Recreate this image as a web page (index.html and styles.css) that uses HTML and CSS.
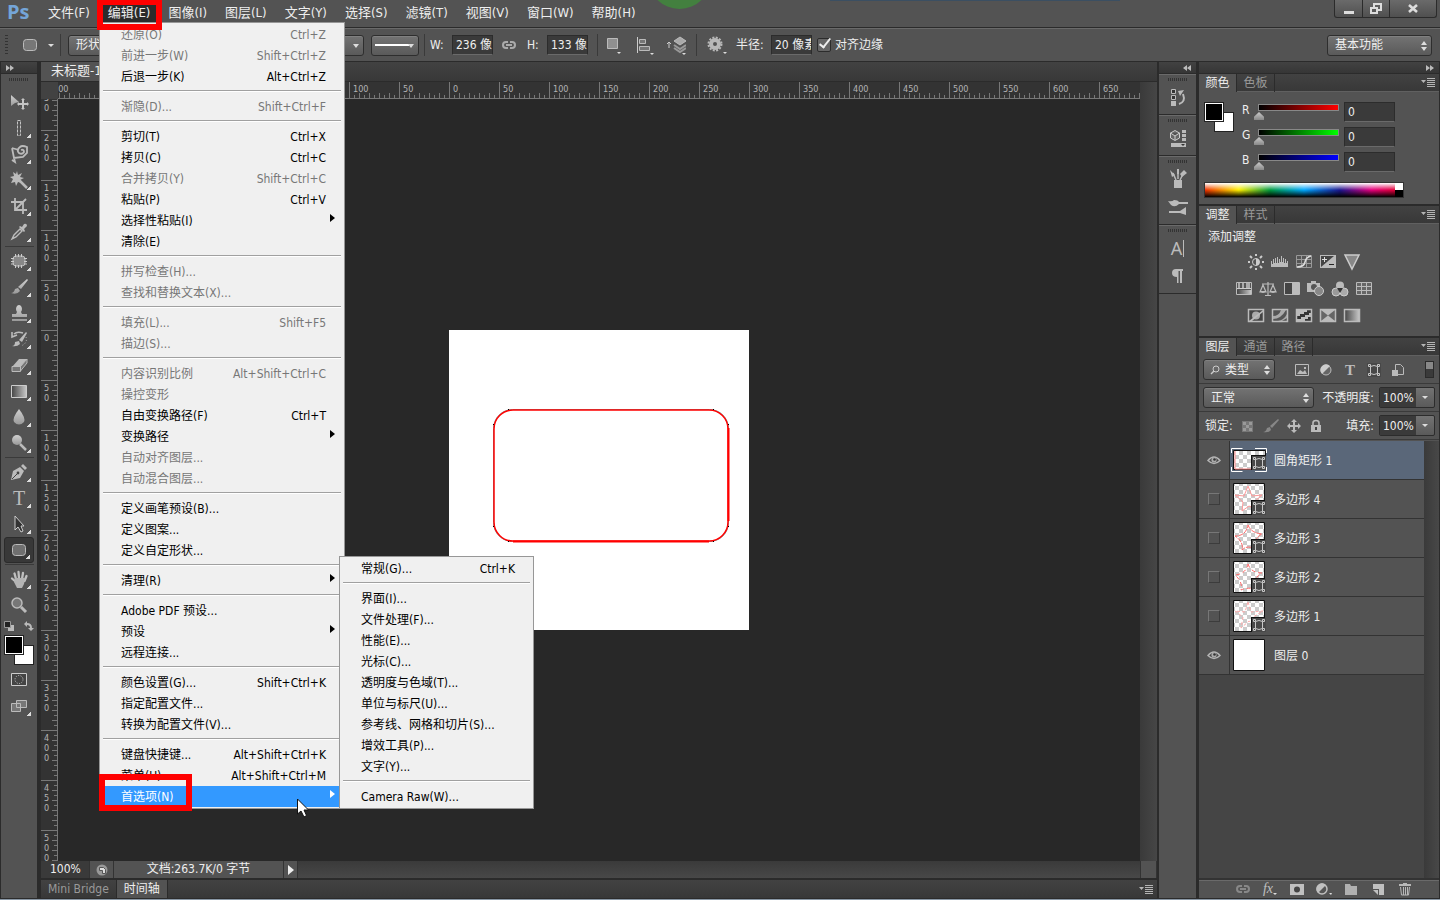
FILE: index.html
```
<!DOCTYPE html>
<html lang="zh-CN">
<head>
    <meta charset="UTF-8">
    <meta name="viewport" content="width=device-width, initial-scale=1.0">
    <title>Photoshop</title>
    <link rel="stylesheet" href="styles.css">
</head>
<body>
    <svg class="defs" aria-hidden="true">
        <defs>
            <linearGradient id="metal" x1="0" y1="0" x2="0" y2="1"><stop offset="0" stop-color="#d0d0d0"/><stop offset="1" stop-color="#999"/></linearGradient>
            <linearGradient id="fade"><stop offset="0" stop-color="#444"/><stop offset="1" stop-color="#c8c8c8"/></linearGradient>
            <pattern id="checker" width="8" height="8" patternUnits="userSpaceOnUse"><path fill="#fff" d="M0 0h8v8H0z"/><path fill="#ccc" d="M0 0h4v4H0zM4 4h4v4H4z"/></pattern>
        </defs>
        <symbol id="eye" viewBox="0 0 14 12"><path fill="#484848" stroke="#b4b4b4" stroke-width="1.500" d="M1 6.500q6-7 12 0-6 6-12 0z"/><circle cx="7" cy="6" r="2.600" fill="#aaa"/><circle cx="7.500" cy="5.500" r="1.300" fill="#333"/></symbol>
        <symbol id="vector" viewBox="0 0 14 14"><path fill="#484848" d="M0 0h14v14H0z"/><path d="M3.500 3.500q3.500-2 7 0v7q-3.500 2-7 0z" fill="none" stroke="#c8c8c8"/><path fill="#484848" stroke="#c8c8c8" d="M1.500 1.500h2v2h-2zM10.500 1.500h2v2h-2zM1.500 10.500h2v2h-2zM10.500 10.500h2v2h-2z"/></symbol>
        <symbol id="link" viewBox="0 0 16 10"><path d="M7 8H5a3 3 0 0 1 0-6h2M9 2h2a3 3 0 0 1 0 6H9M5 5h6" fill="none" stroke="currentColor" stroke-width="2"/></symbol>
        <symbol id="flyout" viewBox="0 0 14 9"><path fill="#b4b4b4" d="M0 2h5L2.500 5zM6 0h8v1H6zM6 2h8v1H6zM6 4h8v1H6zM6 6h8v1H6zM6 8h8v1H6z"/></symbol>
    </svg>

    <header class="menubar">
        <span class="logo">Ps</span>
        <nav class="menus">
            <button>文件(F)</button>
            <button class="open">编辑(E)</button>
            <button>图像(I)</button>
            <button>图层(L)</button>
            <button>文字(Y)</button>
            <button>选择(S)</button>
            <button>滤镜(T)</button>
            <button>视图(V)</button>
            <button>窗口(W)</button>
            <button>帮助(H)</button>
        </nav>
        <div class="window-buttons">
            <button aria-label="最小化"><svg width="12" height="12"><path fill="#ddd" d="M1 8h10v3H1z"/></svg></button>
            <button aria-label="还原"><svg width="14" height="12"><path fill="none" stroke="#ddd" stroke-width="2" d="M5 4V1h7v6H9M2 5h6v5H2z"/></svg></button>
            <button class="close" aria-label="关闭"><svg width="12" height="12"><path stroke="#ddd" stroke-width="2.600" d="M2 2l8 7M10 2L2 9"/></svg></button>
        </div>
        <i class="behind-green"></i>
        <i class="behind-blue"></i>
    </header>

    <section class="options">
        <i class="grip-v"></i>
        <button class="icon preset" aria-label="圆角矩形工具">
            <svg width="16" height="14"><rect x="1.500" y="1.500" width="13" height="11" rx="3" fill="#777" stroke="#bbb"/></svg>
            <i class="tri"></i>
        </button>
        <i class="rule"></i>
        <span class="select mode"><select aria-label="模式"><option>形状</option></select></span>
        <div class="paint">
            <span class="select drop"><select aria-label="描边宽度"><option>3 点</option></select></span>
        </div>
        <span class="select drop line-style"><select aria-label="描边类型"><option></option></select></span>
        <i class="rule"></i>
        <label class="caps" for="w">W:</label><input id="w" value="236 像素">
        <button class="icon link" aria-label="链接"><svg width="16" height="10"><use href="#link"/></svg></button>
        <label class="caps h-label" for="h">H:</label><input id="h" value="133 像素">
        <i class="rule"></i>
        <div class="ops">
            <button class="icon" aria-label="路径操作"><svg width="20" height="20"><path fill="#909090" stroke="#bbb" d="M3.500 3.500h10v10h-10z"/><path fill="#ddd" d="M13 17h4l-2 2z"/></svg></button>
            <button class="icon" aria-label="路径对齐"><svg width="20" height="20"><path fill="#ccc" d="M2 2h1v16H2z"/><path fill="#777" stroke="#bbb" d="M4.500 4.500h6v4h-6zM4.500 11.500h10v4h-10z"/><path fill="#ddd" d="M15 18h4l-2 2z"/></svg></button>
            <button class="icon" aria-label="路径排列"><svg width="20" height="20"><path d="M8 13l6 4 6-4M8 10l6 4 6-4" fill="none" stroke="#999" stroke-width="2"/><path fill="#aaa" stroke="#bbb" d="M8 6l6-4 6 4-6 4z"/><path d="M3 13V7M1 9l2-2 2 2" fill="none" stroke="#ccc"/><path fill="#ddd" d="M16 18h4l-2 2z"/></svg></button>
        </div>
        <i class="rule"></i>
        <button class="icon gear" aria-label="设置"><svg width="20" height="20"><circle cx="8" cy="9" r="4" fill="none" stroke="#b8b8b8" stroke-width="4"/><circle cx="8" cy="9" r="6.500" fill="none" stroke="#b8b8b8" stroke-width="2" stroke-dasharray="2 1.400"/><path fill="#ddd" d="M16 17h4l-2 2z"/></svg></button>
        <label class="radius" for="radius">半径:</label><input id="radius" value="20 像素">
        <label class="check"><input type="checkbox" checked>对齐边缘</label>
        <span class="select workspace"><select aria-label="工作区"><option>基本功能</option></select></span>
    </section>

    <main class="workspace-grid">
        <aside class="toolbox">
            <div class="strip"><svg width="8" height="6"><path fill="#bbb" d="M0 0l4 3-4 3zM4 0l4 3-4 3z"/></svg></div>
            <div class="tools">
                <i class="grip"></i>
                <button aria-label="移动"><svg width="20" height="20"><path fill="url(#metal)" d="M2 3l8 7-4 1-4 3z"/><path fill="#c4c4c4" d="M14 6l2 2h-1v3h3v-1l2 2-2 2v-1h-3v3h1l-2 2-2-2h1v-3h-3v1l-2-2 2-2v1h3V8h-1z"/></svg></button>
                <button class="more" aria-label="选框"><svg width="20" height="20"><path d="M8.500 2.500h3v15h-3z" fill="none" stroke="#c4c4c4" stroke-dasharray="3 1"/></svg></button>
                <button class="more" aria-label="套索"><svg width="20" height="20"><path d="M3 4l2 10 9-1 4-4V3q-5-2-7 0-4 3-1 6 3 2 5-1 0-3-3-2M3 4l7 2M5 14l1 4-3-2" fill="none" stroke="#bbb" stroke-width="1.800"/></svg></button>
                <button class="more" aria-label="魔棒"><svg width="20" height="20"><path fill="#bbb" d="M8 1l1 4 4-2-2 4 4 1-4 2 2 3-4-1-2 4-1-4-4 1 2-4-3-2 4-1-1-4 3 2z"/><path stroke="#bbb" stroke-width="2.500" d="M10 10l8 8"/></svg></button>
                <button class="more" aria-label="裁剪"><svg width="20" height="20"><path d="M6 2v12h12M2 6h12v12M7 13l10-10" fill="none" stroke="#bbb" stroke-width="1.800"/></svg></button>
                <button class="more" aria-label="吸管"><svg width="20" height="20"><path d="M3 17l2-4 6-6 2 2-6 6z" fill="none" stroke="#bbb" stroke-width="1.400"/><path fill="#bbb" d="M10 5l1-1 2 1 2-3q3-1 3 2l-3 3 1 2-1 1z"/></svg></button>
                <hr>
                <button class="more" aria-label="污点修复"><svg width="20" height="20"><rect x="4" y="5" width="12" height="10" rx="3" fill="#888" stroke="#bbb"/><path d="M6.500 3v3M9.500 3v3M12.500 3v3M6.500 14v3M9.500 14v3M12.500 14v3M2 7.500h3M2 10.500h3M2 13h3M15 7.500h3M15 10.500h3M15 13h3" stroke="#ccc"/></svg></button>
                <button class="more" aria-label="画笔"><svg width="20" height="20"><path fill="url(#metal)" d="M2 16q3 0 4-4l3-1 2 3q-3 4-9 2zM9 10l9-8 1 1-7 9z"/></svg></button>
                <button class="more" aria-label="图章"><svg width="20" height="20"><path fill="url(#metal)" d="M8 9q-2-3 0-6 2-2 4 0 2 3 0 6l1 2h5v3H3v-3h4zM3 16h15v2H3z"/></svg></button>
                <button class="more" aria-label="历史画笔"><svg width="20" height="20"><path fill="#bbb" d="M3 17q3 0 3-4l4-1 1 3q-3 3-8 2zM10 11l7-8 1 1-5 9z"/><path d="M14 4q-6-2-9 1M3 3v5l5-2" fill="none" stroke="#bbb" stroke-width="1.600"/><path d="M17 8q2 6-5 9" fill="none" stroke="#bbb" stroke-dasharray="1 2"/></svg></button>
                <button class="more" aria-label="橡皮擦"><svg width="20" height="20"><path fill="#bbb" d="M10 4h8l-6 8H3z"/><path fill="#777" stroke="#bbb" d="M3 11.500h8.500v5H3zM11.500 11.500L18 4v4l-6.500 8z"/></svg></button>
                <button class="more" aria-label="渐变"><svg width="20" height="20"><path fill="url(#fade)" stroke="#ccc" d="M2.500 4.500h15v12h-15z"/></svg></button>
                <button class="more" aria-label="模糊"><svg width="20" height="20"><path fill="url(#metal)" d="M10 2q7 9 5 13-5 5-10 0-2-4 5-13z"/></svg></button>
                <button class="more" aria-label="减淡"><svg width="20" height="20"><circle cx="8" cy="7" r="5" fill="url(#metal)"/><path stroke="#bbb" stroke-width="2.500" d="M11 11l6 6"/></svg></button>
                <hr>
                <button class="more" aria-label="钢笔"><svg width="20" height="20"><path fill="#bbb" d="M2 18l2-9 7-4 4 4-4 7zM12 4l2-2 4 4-2 2z"/><path d="M3 17l6-6" stroke="#444"/><circle cx="9" cy="11" r="1.400" fill="#444"/></svg></button>
                <button class="more type" aria-label="文字">T</button>
                <button class="more" aria-label="路径选择"><svg width="20" height="20"><path fill="#333" stroke="#ccc" d="M6 2v14l3-3 3 5 2-1-2-5h3z"/></svg></button>
                <button class="more active" aria-label="圆角矩形"><svg width="20" height="20"><rect x="3.500" y="4.500" width="13" height="11" rx="3" fill="#707070" stroke="#bbb"/></svg></button>
                <hr>
                <button class="more" aria-label="抓手"><svg width="20" height="20"><path fill="none" stroke="#c0c0c0" stroke-width="2.300" stroke-linecap="round" d="M7 10L5.500 4.500M10 9L9.500 3M13 10l1-6M15.500 12l2-5M7 13L3 9.500"/><path fill="#b4b4b4" d="M6 9h10l-1 6-2 4H8l-3-6z"/></svg></button>
                <button aria-label="缩放"><svg width="20" height="20"><path stroke="#bbb" stroke-width="3" d="M12 12l5 5"/><circle cx="8" cy="8" r="5" fill="#777" stroke="#bbb" stroke-width="1.500"/></svg></button>
                <div class="mini">
                    <svg width="10" height="10"><path fill="#bbb" d="M4 4h6v6H4z"/><path fill="#222" stroke="#999" d="M.5.5h6v6h-6z"/></svg>
                    <svg width="10" height="10"><path d="M3 0L0 3l3 3V4q3 0 3 3H4l3 3 3-3H8Q8 2 3 2z" fill="#bbb"/></svg>
                </div>
                <div class="swatches"><i class="back"></i><i class="front"></i></div>
                <button aria-label="快速蒙版"><svg width="20" height="20"><path fill="#444" stroke="#ccc" d="M2.500 3.500h15v12h-15z"/><circle cx="10" cy="9.500" r="4" fill="none" stroke="#ccc" stroke-dasharray="1 1.500"/></svg></button>
                <button class="more" aria-label="屏幕模式"><svg width="20" height="20"><path fill="#777" stroke="#bbb" d="M2.500 7.500h9v8h-9zM7.500 4.500h10v7h-10z"/></svg></button>
            </div>
        </aside>

        <section class="document">
            <div class="doc-tabs"><span>未标题-1</span></div>
            <div class="canvas-grid">
                <i class="corner"></i>
                <div class="ruler-x"></div>
                <i class="scroll-y"></i>
                <div class="ruler-y"></div>
                <div class="canvas">
                    <svg class="artboard" width="300" height="300">
                        <path fill="#fff" d="M0 0h300v300H0z"/>
                        <rect x="44.500" y="79.500" width="235" height="132" rx="19" fill="none" stroke="#7a9a9a"/>
                        <rect x="45" y="80" width="234" height="131" rx="19" fill="none" stroke="#f00" stroke-width="1.500"/>
                        <path d="M279.500 98v93M64 211.500h196" stroke="#f00" stroke-width="2"/>
                        <path fill="#000" d="M59 79h1v1h-1zM264 79h1v1h-1zM59 211h1v1h-1zM264 211h1v1h-1zM44 94h1v1h-1zM279 94h1v1h-1zM44 196h1v1h-1zM279 196h1v1h-1z"/>
                    </svg>
                </div>
            </div>
            <div class="status">
                <span class="percent">100%</span>
                <button class="export" aria-label="导出"><svg width="12" height="12"><circle cx="6" cy="6" r="5.500" fill="#999"/><path d="M3.500 3.500h4l2 2v4h-3v-3h-3z" fill="#ddd" stroke="#555"/></svg></button>
                <span class="size">文档:263.7K/0 字节</span>
                <button class="next" aria-label="状态菜单"><svg width="6" height="10"><path fill="#eee" d="M0 0l6 5-6 5z"/></svg></button>
                <i class="scroll-x"></i>
                <i class="scroll-corner"></i>
            </div>
            <div class="bottom-tabs">
                <button>Mini Bridge</button>
                <button class="on">时间轴</button>
                <svg class="flyout" width="14" height="9"><use href="#flyout"/></svg>
            </div>
        </section>

        <aside class="dock">
            <div class="strip end"><svg width="8" height="6"><path fill="#bbb" d="M4 0L0 3l4 3zM8 0L4 3l4 3z"/></svg></div>
            <div class="dock-group">
                <i class="grip"></i>
                <button aria-label="历史记录"><svg width="18" height="20"><path fill="#333" stroke="#bbb" d="M2.500 2.500h4v4h-4zM2.500 8.500h4v4h-4z"/><path fill="#bbb" d="M2 14h5v5H2z"/><path d="M10 17q7-2 4-10" fill="none" stroke="#bbb" stroke-width="2"/><path fill="#bbb" d="M9 4l6-1-4 6z"/></svg></button>
            </div>
            <div class="dock-group">
                <i class="grip"></i>
                <button aria-label="属性"><svg width="18" height="20"><path fill="#666" stroke="#ccc" d="M1.500 5l4.500-2.500L10.500 5v5L6 12.500 1.500 10zM1.500 5L6 8l4.500-3M6 8v4"/><path fill="#bbb" d="M13 2h4v3h-4zM13 6h4v3h-4zM13 10h4v3h-4zM2 15h15v4H2z"/><path fill="#333" d="M12 16h4l-2 2z"/></svg></button>
            </div>
            <div class="dock-group">
                <i class="grip"></i>
                <button aria-label="画笔预设"><svg width="18" height="20"><path fill="#bbb" d="M5 11h8v8H5z"/><path d="M7 11L4 4M9 10V4M11 11l3-6" stroke="#bbb" stroke-width="1.500"/><path fill="#bbb" d="M1 1l5 5-3 2zM8 0h2v5H8zM11 5l4-4 3 3-5 4z"/></svg></button>
                <button aria-label="画笔"><svg width="20" height="20"><path fill="#bbb" d="M0 4q4 1 6-1 4 0 5 2h9v2h-9q-4 4-8 1zM1 14h11l6-4v8l-6-2H1z"/></svg></button>
            </div>
            <div class="dock-group">
                <i class="grip"></i>
                <button class="char" aria-label="字符">A<i></i></button>
                <button aria-label="段落"><svg width="18" height="20"><path fill="#bbb" d="M7 3h7v2h-1v12h-2V5H9.500v12H8v-6Q3 11 3 7q0-4 4-4z"/></svg></button>
            </div>
        </aside>

        <aside class="panels">
            <div class="strip end"><svg width="8" height="6"><path fill="#bbb" d="M0 0l4 3-4 3zM4 0l4 3-4 3z"/></svg></div>
            <section class="panel">
                <div class="tabs"><button class="on">颜色</button><button>色板</button><svg class="flyout" width="14" height="9"><use href="#flyout"/></svg></div>
                <div class="color">
                    <div class="swatches"><i class="back"></i><i class="front"></i></div>
                    <div class="sliders">
                        <div class="slider"><label for="r">R</label><input class="red" type="range" max="255" value="0" aria-label="红"><input id="r" value="0"></div>
                        <div class="slider"><label for="g">G</label><input class="green" type="range" max="255" value="0" aria-label="绿"><input id="g" value="0"></div>
                        <div class="slider"><label for="b">B</label><input class="blue" type="range" max="255" value="0" aria-label="蓝"><input id="b" value="0"></div>
                    </div>
                    <div class="spectrum"><i></i></div>
                </div>
            </section>
            <section class="panel">
                <div class="tabs"><button class="on">调整</button><button>样式</button><svg class="flyout" width="14" height="9"><use href="#flyout"/></svg></div>
                <div class="adjust">
                    <p>添加调整</p>
                    <div class="adjust-row">
                        <button aria-label="亮度/对比度"><svg width="18" height="18"><circle cx="9" cy="9" r="3.500" fill="#555" stroke="#ccc"/><path fill="#ccc" d="M9 5.500a3.500 3.500 0 0 1 0 7z"/><path d="M9 1v2M9 15v2M1 9h2M15 9h2M3 3l2 2M13 13l2 2M3 15l2-2M13 5l2-2" stroke="#ccc" stroke-width="2"/></svg></button>
                        <button aria-label="色阶"><svg width="18" height="18"><path fill="#bbb" d="M0 14V8h1v3h1V6h1v4h1V5h1v5h1V4h1v6h1V6h1v3h1V3h1v6h1V5h1v5h1V6h1v4h1V8h1v6z"/></svg></button>
                        <button aria-label="曲线"><svg width="18" height="18"><path fill="#555" stroke="#999" d="M1.500 2.500h15v12h-15zM6.500 3v12M11.500 3v12M2 6.500h14M2 10.500h14"/><path d="M2 14q7 0 8-5t6-6" fill="none" stroke="#ddd" stroke-width="1.500"/></svg></button>
                        <button aria-label="曝光度"><svg width="18" height="18"><path fill="#bbb" d="M1 2h16v13H1z"/><path fill="#444" d="M2 14V3h13z"/><path d="M3 6.500h5M5.500 4v5" stroke="#ddd"/><path d="M10 11.500h5" stroke="#222"/></svg></button>
                        <button aria-label="自然饱和度"><svg width="18" height="18"><path fill="#888" stroke="#ccc" stroke-width="1.500" d="M2 2h14L9 16z"/></svg></button>
                    </div>
                    <div class="adjust-row">
                        <button aria-label="色相/饱和度"><svg width="18" height="18"><path fill="#555" stroke="#bbb" d="M1.500 2.500h15v12h-15z"/><path fill="#aaa" d="M3 3h2v5H3zM7 3h2v5H7zM11 3h4v5h-4z"/><path fill="url(#fade)" d="M2 10h14v4H2z"/><path stroke="#ccc" d="M2 8.500h14"/></svg></button>
                        <button aria-label="色彩平衡"><svg width="18" height="18"><path d="M9 2v13M3 4h12M6 15.500h6M4 5l-3 7h6zM14 5l-3 7h6z" fill="none" stroke="#bbb" stroke-width="1.200"/><path fill="#bbb" d="M1 11h6q-3 4-6 0zM11 11h6q-3 4-6 0z"/></svg></button>
                        <button aria-label="黑白"><svg width="18" height="18"><path fill="#444" stroke="#bbb" d="M1.500 2.500h15v12h-15z"/><path fill="#bbb" d="M9 3h7v11H9z"/></svg></button>
                        <button aria-label="照片滤镜"><svg width="18" height="18"><path fill="#bbb" d="M0 3h4V1h5v2h4v9H0z"/><circle cx="7" cy="7" r="3" fill="#555"/><circle cx="12" cy="11" r="4.500" fill="#888" stroke="#ccc"/></svg></button>
                        <button aria-label="通道混合器"><svg width="18" height="18"><circle cx="9" cy="5.500" r="4" fill="#bbb"/><circle cx="5" cy="12" r="4" fill="#999" stroke="#ccc"/><circle cx="13" cy="12" r="4" fill="#aaa" stroke="#ccc"/><path fill="#333" d="M6 8h6l-3 5z"/></svg></button>
                        <button aria-label="颜色查找"><svg width="18" height="18"><path fill="#666" stroke="#bbb" d="M1.500 2.500h15v12h-15zM6.500 3v12M11.500 3v12M2 6.500h14M2 10.500h14"/></svg></button>
                    </div>
                    <div class="adjust-row">
                        <button aria-label="反相"><svg width="18" height="18"><path fill="#444" stroke="#bbb" stroke-width="1.500" d="M1.500 2.500h15v12h-15z"/><circle cx="9" cy="8.500" r="4" fill="#aaa"/><path fill="#bbb" d="M2 14L16 3v2L5 14z"/></svg></button>
                        <button aria-label="色调分离"><svg width="18" height="18"><path fill="#555" stroke="#bbb" stroke-width="1.500" d="M1.500 2.500h15v12h-15z"/><path fill="#aaa" d="M2 9q6 0 8-6h5Q10 12 2 12zM7 14q6-1 9-7v4l-5 3z"/></svg></button>
                        <button aria-label="阈值"><svg width="18" height="18"><path fill="#333" stroke="#bbb" stroke-width="1.500" d="M1.500 2.500h15v12h-15z"/><path fill="#bbb" d="M2 3h10v2H9v2H5v2H2zM2 14v-2h4v-2h4V8h4V6h2v4h-3v2h-3v2z"/></svg></button>
                        <button aria-label="可选颜色"><svg width="18" height="18"><path fill="#666" stroke="#bbb" stroke-width="1.500" d="M1.500 2.500h15v12h-15z"/><path fill="#bbb" d="M2 3h14L9 8.500zM2 14h14L9 8.500z"/></svg></button>
                        <button aria-label="渐变映射"><svg width="18" height="18"><path fill="url(#fade)" stroke="#bbb" stroke-width="1.500" d="M1.500 2.500h15v12h-15z"/></svg></button>
                    </div>
                </div>
            </section>
            <section class="panel layers">
                <div class="tabs"><button class="on">图层</button><button>通道</button><button>路径</button><svg class="flyout" width="14" height="9"><use href="#flyout"/></svg></div>
                <div class="layer-bar filter">
                    <span class="select kind"><svg width="10" height="10"><circle cx="6" cy="4" r="3" fill="none" stroke="#ccc"/><path stroke="#ccc" stroke-width="1.500" d="M4 6L1 9"/></svg><select aria-label="滤镜类型"><option>类型</option></select></span>
                    <div class="filter-icons">
                        <button aria-label="像素"><svg width="14" height="14"><path fill="#555" stroke="#bbb" d="M.5 1.500h13v11H.5z"/><path fill="#bbb" d="M2 11l3-4 3 2 2-2 2 4zM9 4h2v2H9z"/></svg></button>
                        <button aria-label="调整"><svg width="14" height="14"><circle cx="7" cy="7" r="5" fill="#666" stroke="#bbb"/><path fill="#ccc" d="M3 11l8-8a5 5 0 0 0-8 8z"/></svg></button>
                        <button class="serif" aria-label="文字">T</button>
                        <button aria-label="形状"><svg width="14" height="14"><use href="#vector"/></svg></button>
                        <button aria-label="智能对象"><svg width="14" height="14"><path fill="#555" stroke="#bbb" d="M4.500 1.500h5l3 3v7h-8z"/><path fill="#bbb" d="M1 7h6v6H1z"/></svg></button>
                    </div>
                    <button class="toggle" aria-label="打开滤镜"></button>
                </div>
                <div class="layer-bar">
                    <span class="select blend"><select aria-label="混合模式"><option>正常</option></select></span>
                    <label for="opacity">不透明度:</label>
                    <span class="combo"><input id="opacity" value="100%"><button aria-label="不透明度滑块"><i class="tri"></i></button></span>
                </div>
                <div class="layer-bar">
                    <span class="lock-label">锁定:</span>
                    <div class="locks">
                        <button aria-label="锁定透明像素"><svg width="14" height="14"><path fill="#777" d="M1 2h11v11H1z"/><path fill="#999" d="M2 3h3v3H2zM8 3h3v3H8zM5 6h3v3H5zM2 9h3v3H2zM8 9h3v3H8z"/></svg></button>
                        <button aria-label="锁定图像像素"><svg width="16" height="14"><path fill="#888" d="M0 13q3 0 4-4l3-1 1 3q-2 3-8 2zM7 7l8-7 1 1-7 8z"/></svg></button>
                        <button aria-label="锁定位置"><svg width="14" height="14"><path fill="#bbb" d="M7 0l3 3H8v3h3V4l3 3-3 3V8H8v3h2l-3 3-3-3h2V8H3v2L0 7l3-3v2h3V3H4z"/></svg></button>
                        <button aria-label="锁定全部"><svg width="14" height="14"><path d="M4 6V4q0-2.500 3-2.500T10 4v2" fill="none" stroke="#bbb" stroke-width="1.600"/><path fill="#bbb" d="M2 6h10v7H2z"/><path fill="#444" d="M6 8h2v3H6z"/></svg></button>
                    </div>
                    <label for="fill">填充:</label>
                    <span class="combo"><input id="fill" value="100%"><button aria-label="填充滑块"><i class="tri"></i></button></span>
                </div>
                <div class="layer-body">
                    <ul class="layer-list">
                        <li class="selected">
                            <button class="visible" aria-label="可见性"><svg width="14" height="12"><use href="#eye"/></svg></button>
                            <svg class="thumb" width="36" height="34"><path d="M.5 10V5.500h11M24 5.500h11.500V10M.5 24v4.500h11M24 28.500h11.500V24" fill="none" stroke="#fff"/><path fill="url(#checker)" stroke="#111" d="M2.500 7.500h32v19h-32z"/><path d="M4 8v18h17" fill="none" stroke="#f88"/><path fill="#111" d="M20 12h15v15H20z"/><use href="#vector" x="21" y="13" width="14" height="14"/></svg>
                            <span>圆角矩形 1</span>
                        </li>
                        <li>
                            <button class="visible off" aria-label="可见性"></button>
                            <svg class="thumb" width="36" height="34"><path fill="url(#checker)" stroke="#111" d="M2.500 1.500h31v31h-31z"/><path d="M17 4l4 10 10-1-8 7 5 9-10-5-7 5 1-9-8-7 9 1z" fill="none" stroke="#f99"/><path fill="#111" d="M20 18h14v15H20z"/><use href="#vector" x="21" y="19" width="14" height="14"/></svg>
                            <span>多边形 4</span>
                        </li>
                        <li>
                            <button class="visible off" aria-label="可见性"></button>
                            <svg class="thumb" width="36" height="34"><path fill="url(#checker)" stroke="#111" d="M2.500 1.500h31v31h-31z"/><path d="M17 4q3 8 14 9-9 4-6 16-8-6-14 0 2-8-7-14 11 0 13-11z" fill="none" stroke="#f66" stroke-dasharray="5 1"/><path fill="#111" d="M20 18h14v15H20z"/><use href="#vector" x="21" y="19" width="14" height="14"/></svg>
                            <span>多边形 3</span>
                        </li>
                        <li>
                            <button class="visible off" aria-label="可见性"></button>
                            <svg class="thumb" width="36" height="34"><path fill="url(#checker)" stroke="#111" d="M2.500 1.500h31v31h-31z"/><path d="M17 4q3 9 14 9-9 4-6 16-8-2-15 1 2-8-6-15 11-1 13-11z" fill="none" stroke="#f66" stroke-dasharray="4 3"/><path fill="#111" d="M20 18h14v15H20z"/><use href="#vector" x="21" y="19" width="14" height="14"/></svg>
                            <span>多边形 2</span>
                        </li>
                        <li>
                            <button class="visible off" aria-label="可见性"></button>
                            <svg class="thumb" width="36" height="34"><path fill="url(#checker)" stroke="#111" d="M2.500 1.500h31v31h-31z"/><path d="M17 3l3 10 12-1-10 6 5 10-9-6-8 7 2-11-8-6 10 1z" fill="none" stroke="#faa" stroke-dasharray="3 2"/><path fill="#111" d="M20 18h14v15H20z"/><use href="#vector" x="21" y="19" width="14" height="14"/></svg>
                            <span>多边形 1</span>
                        </li>
                        <li>
                            <button class="visible" aria-label="可见性"><svg width="14" height="12"><use href="#eye"/></svg></button>
                            <svg class="thumb" width="36" height="34"><path fill="#fff" stroke="#111" d="M2.500 1.500h31v31h-31z"/></svg>
                            <span>图层 0</span>
                        </li>
                    </ul>
                    <i class="layer-scroll"></i>
                </div>
                <div class="layer-actions">
                    <button class="dim" aria-label="链接图层"><svg width="16" height="10"><use href="#link"/></svg></button>
                    <button class="fx" aria-label="图层样式">fx<i class="tri"></i></button>
                    <button aria-label="添加蒙版"><svg width="14" height="14"><path fill="#c0c0c0" d="M0 2h14v11H0z"/><circle cx="7" cy="7.500" r="3" fill="#444"/></svg></button>
                    <button aria-label="新建调整图层"><svg width="16" height="14"><circle cx="6" cy="7" r="5" fill="#555" stroke="#c0c0c0" stroke-width="1.500"/><path fill="#c0c0c0" d="M2 11l8-8a5 5 0 0 0-8 8z"/><path fill="#ddd" d="M13 11h3l-1 2z"/></svg></button>
                    <button aria-label="新建组"><svg width="14" height="14"><path fill="#b0b0b0" d="M1 2h5l1 2h6v9H1z"/></svg></button>
                    <button aria-label="新建图层"><svg width="14" height="14"><path fill="#c0c0c0" d="M2 2h11v11H8V7H2z"/><path fill="#c0c0c0" d="M2 8l5 5V8z"/></svg></button>
                    <button aria-label="删除图层"><svg width="14" height="14"><path fill="#b8b8b8" d="M5 1h4v1h4v2H1V2h4z"/><path d="M2.500 5l1 8h7l1-8M5.500 5v8M7.500 5v8M9.500 5v8" fill="none" stroke="#b8b8b8"/></svg></button>
                </div>
            </section>
        </aside>
    </main>
    <footer></footer>

    <ul class="menu edit-menu">
        <li><button disabled>还原(O)<kbd>Ctrl+Z</kbd></button></li>
        <li><button disabled>前进一步(W)<kbd>Shift+Ctrl+Z</kbd></button></li>
        <li><button>后退一步(K)<kbd>Alt+Ctrl+Z</kbd></button></li>
        <li class="sep"></li>
        <li><button disabled>渐隐(D)...<kbd>Shift+Ctrl+F</kbd></button></li>
        <li class="sep"></li>
        <li><button>剪切(T)<kbd>Ctrl+X</kbd></button></li>
        <li><button>拷贝(C)<kbd>Ctrl+C</kbd></button></li>
        <li><button disabled>合并拷贝(Y)<kbd>Shift+Ctrl+C</kbd></button></li>
        <li><button>粘贴(P)<kbd>Ctrl+V</kbd></button></li>
        <li><button class="sub">选择性粘贴(I)</button></li>
        <li><button>清除(E)</button></li>
        <li class="sep"></li>
        <li><button disabled>拼写检查(H)...</button></li>
        <li><button disabled>查找和替换文本(X)...</button></li>
        <li class="sep"></li>
        <li><button disabled>填充(L)...<kbd>Shift+F5</kbd></button></li>
        <li><button disabled>描边(S)...</button></li>
        <li class="sep"></li>
        <li><button disabled>内容识别比例<kbd>Alt+Shift+Ctrl+C</kbd></button></li>
        <li><button disabled>操控变形</button></li>
        <li><button>自由变换路径(F)<kbd>Ctrl+T</kbd></button></li>
        <li><button class="sub">变换路径</button></li>
        <li><button disabled>自动对齐图层...</button></li>
        <li><button disabled>自动混合图层...</button></li>
        <li class="sep"></li>
        <li><button>定义画笔预设(B)...</button></li>
        <li><button>定义图案...</button></li>
        <li><button>定义自定形状...</button></li>
        <li class="sep"></li>
        <li><button class="sub">清理(R)</button></li>
        <li class="sep"></li>
        <li><button>Adobe PDF 预设...</button></li>
        <li><button class="sub">预设</button></li>
        <li><button>远程连接...</button></li>
        <li class="sep"></li>
        <li><button>颜色设置(G)...<kbd>Shift+Ctrl+K</kbd></button></li>
        <li><button>指定配置文件...</button></li>
        <li><button>转换为配置文件(V)...</button></li>
        <li class="sep"></li>
        <li><button>键盘快捷键...<kbd>Alt+Shift+Ctrl+K</kbd></button></li>
        <li><button>菜单(U)...<kbd>Alt+Shift+Ctrl+M</kbd></button></li>
        <li class="current">
            <button class="sub">首选项(N)</button>
            <ul class="menu submenu">
                <li><button>常规(G)...<kbd>Ctrl+K</kbd></button></li>
                <li class="sep"></li>
                <li><button>界面(I)...</button></li>
                <li><button>文件处理(F)...</button></li>
                <li><button>性能(E)...</button></li>
                <li><button>光标(C)...</button></li>
                <li><button>透明度与色域(T)...</button></li>
                <li><button>单位与标尺(U)...</button></li>
                <li><button>参考线、网格和切片(S)...</button></li>
                <li><button>增效工具(P)...</button></li>
                <li><button>文字(Y)...</button></li>
                <li class="sep"></li>
                <li><button>Camera Raw(W)...</button></li>
            </ul>
            <i class="mark mark-item"></i>
            <svg class="pointer" width="14" height="20"><path fill="#fff" stroke="#111" d="M1.500 1v15l3.500-3 3 6 2.500-1.500L8 12h4.500z"/></svg>
        </li>
    </ul>
    <i class="mark mark-menu"></i>

    <script>
        // rulers count away from the artboard origin in steps of 50
        function addCell(ruler, n, perDigit) {
            const cell = document.createElement('div');
            const text = String(Math.abs(n));
            if (perDigit) {
                for (const digit of text) {
                    const span = document.createElement('span');
                    span.textContent = digit;
                    cell.appendChild(span);
                }
            } else {
                cell.textContent = text;
            }
            ruler.appendChild(cell);
        }
        const rulerX = document.querySelector('.ruler-x');
        const rulerY = document.querySelector('.ruler-y');
        for (let n = -400; (n + 400) < rulerX.clientWidth; n += 50) addCell(rulerX, n, false);
        for (let n = -250; (n + 250) < rulerY.clientHeight; n += 50) addCell(rulerY, n, true);
    </script>
</body>
</html>
```
FILE: styles.css
```
*, *::before, *::after { box-sizing: border-box; }
body {
    margin: 0;
    height: 100vh;
    display: flex;
    flex-direction: column;
    position: relative;
    overflow: hidden;
    background: #535353;
    color: #eee;
    font-family: "DejaVu Sans Condensed", "Noto Sans CJK SC", sans-serif;
    font-size: 12px;
    line-height: 16px;
}
button, input, select {
    font: inherit;
    color: inherit;
    margin: 0;
    padding: 0;
    border: none;
    background: none;
}
button { display: flex; align-items: center; justify-content: center; }
svg { display: block; flex-shrink: 0; }
ul { list-style: none; margin: 0; padding: 0; }
.defs { position: absolute; width: 0; height: 0; }
.tri {
    border: 3px solid transparent;
    border-top-color: #ddd;
    border-bottom: none;
}

/* menu bar */
.menubar {
    height: 28px;
    flex-shrink: 0;
    display: flex;
    position: relative;
    overflow: hidden;
    border-bottom: 1px solid #2b2b2b;
}
.logo {
    width: 40px;
    padding-left: 7px;
    font: bold 20px/24px "Open Sans", sans-serif;
    color: #74a5d8;
}
.menus { display: flex; height: 26px; font-size: 13px; gap: 2px; }
.menus button { padding: 0 8px; height: 26px; }
.menus .open { background: #2b2b2b; }
.window-buttons {
    display: flex;
    height: 18px;
    margin-left: auto;
    margin-right: 3px;
    border: 1px solid #2b2b2b;
    border-top: none;
    border-radius: 0 0 3px 3px;
    background: linear-gradient(#6a6a6a, #505050);
}
.window-buttons button { width: 27px; }
.window-buttons button + button { border-left: 1px solid #2b2b2b; }
.window-buttons .close { width: 47px; }
.behind-green {
    position: absolute;
    left: 648px;
    top: -54px;
    width: 63px;
    height: 63px;
    border-radius: 50%;
    background: #43803f;
}
.behind-blue {
    position: absolute;
    left: 830px;
    top: 0;
    width: 290px;
    height: 1px;
    background: #3b4f62;
}

/* options bar */
.options {
    height: 34px;
    flex-shrink: 0;
    display: flex;
    align-items: center;
    padding: 0 8px 0 5px;
    border-top: 1px solid #6a6a6a;
    border-bottom: 1px solid #2b2b2b;
}
.options > * { flex-shrink: 0; }
.grip-v {
    width: 3px;
    height: 20px;
    background: repeating-linear-gradient(#333 0 1px, transparent 1px 3px);
}
.preset { width: 48px; gap: 10px; margin-right: 4px; padding-left: 12px; }
.rule { width: 1px; height: 22px; background: #3a3a3a; }
.select {
    display: flex;
    align-items: center;
    position: relative;
    height: 21px;
    border: 1px solid #2e2e2e;
    border-radius: 3px;
    background: linear-gradient(#737373, #5a5a5a);
    box-shadow: inset 0 1px #808080;
}
.select select { appearance: none; flex: 1; height: 19px; padding-left: 7px; outline: none; }
.select option { color: #000; }
.select::before, .select::after {
    content: "";
    position: absolute;
    right: 4px;
    border: 3px solid transparent;
}
.select::before { top: 5px; border-bottom: 4px solid #ddd; border-top: none; }
.select::after { top: 11px; border-top: 4px solid #ddd; border-bottom: none; }
.select.drop::before { display: none; }
.select.drop::after { top: 8px; }
.mode { width: 62px; margin-left: 7px; }
.paint { width: 234px; display: flex; padding-left: 120px; }
.paint .select { flex: 1; }
.line-style { width: 48px; margin: 0 5px 0 7px; }
.line-style select { background: linear-gradient(#fff, #fff) 3px 8px / 34px 2px no-repeat; }
.caps { width: 27px; padding-left: 5px; }
.options > input {
    width: 41px;
    height: 20px;
    padding: 0 0 3px 3px;
    background: #3a3a3a;
    border: 1px solid #2c2c2c;
    border-bottom-color: #6a6a6a;
}
.options .link { width: 32px; color: #aaa; }
.caps.h-label { width: 22px; padding-left: 2px; }
#h { margin-right: 9px; }
.ops { width: 98px; display: flex; gap: 11px; padding-left: 6px; }
.gear { width: 39px; }
.radius { width: 35px; }
.check { display: flex; align-items: center; gap: 4px; margin-left: 5px; }
.check input {
    appearance: none;
    width: 14px;
    height: 14px;
    border: 1px solid #2c2c2c;
    border-radius: 2px;
    background: #666;
    position: relative;
}
.check input:checked::after {
    content: "";
    position: absolute;
    left: 4px;
    top: -3px;
    width: 6px;
    height: 12px;
    border: solid #eee;
    border-width: 0 2px 2px 0;
    transform: rotate(38deg);
}
.workspace { width: 105px; margin-left: auto; }

/* workspace */
.workspace-grid {
    flex: 1;
    min-height: 0;
    display: grid;
    grid-template: minmax(0, 1fr) / 40px minmax(0, 1fr) 40px 242px;
}
.strip {
    height: 12px;
    display: flex;
    align-items: center;
    padding: 0 5px;
    background: linear-gradient(#424242, #363636);
    border-bottom: 1px solid #2b2b2b;
    flex-shrink: 0;
}
.strip.end { justify-content: flex-end; }
.grip {
    width: 20px;
    height: 3px;
    background: repeating-linear-gradient(90deg, #333 0 1px, transparent 1px 2px);
    flex-shrink: 0;
}

.toolbox { border: solid #2b2b2b; border-width: 0 3px 0 1px; }
.tools { display: flex; flex-direction: column; align-items: center; padding-top: 4px; }
.tools .grip { margin-bottom: 8px; }
.tools button { width: 30px; height: 26px; position: relative; }
.tools .more::after {
    content: "";
    position: absolute;
    right: 3px;
    bottom: 3px;
    width: 4px;
    height: 4px;
    background: linear-gradient(135deg, transparent 50%, #ddd 50%);
}
.tools hr { width: 29px; height: 1px; margin: 1px 0; border: none; background: #3a3a3a; }
.tools .active { background: #383838; border: 1px solid #2b2b2b; border-radius: 3px; }
.tools .type { font: 20px/24px "Liberation Serif", serif; color: #bbb; }
.mini { width: 30px; display: flex; justify-content: space-between; margin: 3px 0 4px; }
.swatches { width: 30px; height: 30px; position: relative; }
.swatches i { position: absolute; width: 20px; height: 20px; border: 1px solid #222; }
.swatches .front { left: 0; top: 0; background: #000; box-shadow: inset 0 0 0 1px #fff; }
.swatches .back { right: 0; bottom: 0; background: #fff; }
.tools .swatches { margin-bottom: 2px; }

/* document */
.document { display: flex; flex-direction: column; min-width: 0; background: #3a3a3a; border: solid #2b2b2b; border-width: 0 1px; }
.doc-tabs { height: 20px; background: linear-gradient(#424242, #383838); border-bottom: 1px solid #2b2b2b; display: flex; flex-shrink: 0; }
.doc-tabs span { padding: 1px 12px 0 10px; background: #535353; font-size: 13px; }
.canvas-grid {
    flex: 1;
    min-height: 0;
    display: grid;
    grid-template: 17px minmax(0, 1fr) / 17px minmax(0, 1fr) 17px;
    background: #282828;
}
.corner { background: #424242; }
.ruler-x, .ruler-y {
    overflow: hidden;
    display: flex;
    color: #b4b4b4;
    font-size: 9px;
    line-height: 10px;
    background: #333;
}
.ruler-x { border-bottom: 1px solid #777; }
.ruler-x div {
    flex: 0 0 50px;
    padding: 2px 0 0 3px;
    border-left: 1px solid #777;
    background:
        repeating-linear-gradient(90deg, transparent 0 9px, #777 9px 10px) 0 100% / 100% 5px no-repeat,
        repeating-linear-gradient(90deg, transparent 0 4px, #777 4px 5px) 0 100% / 100% 3px no-repeat;
}
.ruler-x div:first-child { margin-left: -9px; }
.ruler-y { flex-direction: column; border-right: 1px solid #777; }
.ruler-y div {
    flex: 0 0 50px;
    padding: 2px 0 0 3px;
    border-top: 1px solid #777;
    background:
        repeating-linear-gradient(transparent 0 9px, #777 9px 10px) 100% 0 / 5px 100% no-repeat,
        repeating-linear-gradient(transparent 0 4px, #777 4px 5px) 100% 0 / 3px 100% no-repeat;
}
.ruler-y div:first-child { margin-top: -19px; }
.ruler-y span { display: block; }
.scroll-y { grid-row: 1 / 3; grid-column: 3; background: linear-gradient(90deg, #3a3a3a, #464646); }
.canvas { position: relative; overflow: hidden; }
.artboard { position: absolute; left: 391px; top: 231px; }
.status { height: 17px; display: flex; flex-shrink: 0; background: #535353; }
.status > * { border-right: 1px solid #333; }
.percent { width: 49px; padding-left: 9px; background: #3a3a3a; }
.export { width: 24px; }
.size { width: 170px; text-align: center; }
.next { width: 14px; }
.scroll-x { flex: 1; background: linear-gradient(#3a3a3a, #484848); }
.scroll-corner { width: 16px; }
.bottom-tabs {
    height: 20px;
    flex-shrink: 0;
    display: flex;
    align-items: center;
    border-top: 2px solid #2b2b2b;
    background: linear-gradient(#424242, #383838);
}
.bottom-tabs button { height: 18px; padding: 0 7px; color: #999; border-right: 1px solid #2b2b2b; }
.bottom-tabs .on { background: #535353; color: #eee; }
.flyout { margin-left: auto; margin-right: 4px; }

/* icon dock */
.dock { border-left: 1px solid #2b2b2b; border-right: 2px solid #2b2b2b; }
.dock-group {
    display: flex;
    flex-direction: column;
    align-items: center;
    padding: 4px 0 3px;
    border-bottom: 1px solid #2b2b2b;
    box-shadow: inset 0 1px #6a6a6a;
}
.dock-group button { width: 30px; height: 28px; }
.dock-group .grip { margin-bottom: 2px; }
.char { font: 18px/24px "Noto Sans", sans-serif; color: #bbb; }
.char i { width: 1px; height: 17px; margin-left: 1px; background: #bbb; }

/* panels */
.panels { display: flex; flex-direction: column; border-left: 1px solid #2b2b2b; border-right: 1px solid #2b2b2b; min-height: 0; }
.panel + .panel { border-top: 2px solid #2b2b2b; }
.tabs {
    height: 18px;
    display: flex;
    align-items: center;
    background: linear-gradient(#424242, #383838);
    border-bottom: 1px solid #606060;
    flex-shrink: 0;
}
.tabs button { width: 38px; height: 18px; color: #999; border-right: 1px solid #2b2b2b; }
.tabs .on { background: #535353; color: #eee; }
.color { display: flex; flex-wrap: wrap; height: 112px; padding: 10px 0 0 5px; align-content: flex-start; }
.sliders { margin-left: 8px; }
.slider { display: flex; align-items: flex-start; height: 25px; }
.slider label { width: 10px; margin-right: 2px; }
.slider input[type="range"] {
    appearance: none;
    width: 87px;
    height: 18px;
    margin-right: 3px;
    background: linear-gradient(90deg, #000, var(--hue)) 5px 3px / 79px 5px no-repeat, linear-gradient(#888, #888) 4px 2px / 81px 7px no-repeat;
}
.red { --hue: #f00; }
.green { --hue: #0f0; }
.blue { --hue: #00f; }
.slider input::-webkit-slider-thumb {
    appearance: none;
    width: 10px;
    height: 8px;
    margin-top: 10px;
    background: linear-gradient(#ccc, #888);
    clip-path: polygon(50% 0, 100% 60%, 100% 100%, 0 100%, 0 60%);
}
.slider input:last-child { width: 51px; height: 20px; padding-left: 3px; background: #3a3a3a; border: 1px solid #2c2c2c; border-bottom-color: #6a6a6a; }
.spectrum {
    width: 200px;
    height: 16px;
    margin-top: 5px;
    display: flex;
    justify-content: flex-end;
    border: 1px solid #333;
    background:
        linear-gradient(#fff, transparent 50%, #000),
        linear-gradient(90deg, #f03000, #fff000 17%, #009a40 33%, #00a8ff 50%, #1c1890 68%, #e6007e 84%, #e00020);
}
.spectrum i { width: 8px; background: linear-gradient(#fff 50%, #000 50%); }
.adjust { height: 112px; padding: 5px 0 0 9px; }
.adjust p { margin: 0 0 3px; }
.adjust-row { width: 192px; height: 27px; display: flex; justify-content: center; align-items: center; }
.adjust-row button { width: 24px; height: 20px; }

.layers { flex: 1; min-height: 0; display: flex; flex-direction: column; }
.layer-bar { height: 28px; flex-shrink: 0; display: flex; align-items: center; padding: 0 4px; border-bottom: 1px solid #3a3a3a; }
.kind { width: 72px; padding-left: 6px; }
.kind select { padding-left: 5px; width: 56px; flex: none; }
.filter-icons { display: flex; gap: 10px; margin-left: 20px; }
.filter-icons button { width: 14px; height: 14px; }
.serif { font: bold 15px/18px "Liberation Serif", serif; color: #bbb; }
.toggle { width: 9px; height: 17px; margin-left: auto; margin-right: 1px; border: 1px solid #2b2b2b; background: linear-gradient(#888 50%, #3a3a3a 50%); }
.blend { width: 111px; }
.layer-bar label { margin-left: auto; margin-right: 5px; }
.combo { display: flex; height: 21px; border: 1px solid #2c2c2c; border-radius: 2px; background: linear-gradient(#737373, #5a5a5a); }
.combo input { width: 36px; padding-left: 3px; background: #3a3a3a; }
.combo button { width: 18px; }
.lock-label { margin-left: 2px; width: 36px; }
.locks { display: flex; gap: 8px; }
.layer-body { flex: 1; min-height: 0; display: flex; background: #454545; margin-top: 1px; }
.layer-list { flex: 1; }
.layer-list li { height: 39px; display: flex; align-items: center; background: #535353; border-bottom: 1px solid #333; }
.layer-list span { padding-left: 7px; flex: 1; align-self: stretch; line-height: 40px; }
.layer-list .thumb { margin-left: 1px; }
.layer-list .selected { background: linear-gradient(90deg, #535353 30px, #5a6779 30px); }
.visible { width: 31px; height: 38px; border-right: 1px solid #333; }
.visible.off::after { content: ""; width: 12px; height: 12px; border: 1px solid #3c3c3c; border-top-color: #777; border-left-color: #777; }
.layer-scroll { width: 15px; background: linear-gradient(90deg, #3a3a3a, #484848); }
.layer-actions { height: 20px; flex-shrink: 0; display: flex; align-items: center; gap: 11px; padding-left: 36px; border-top: 2px solid #333; box-shadow: inset 0 1px #6a6a6a; }
.layer-actions button { width: 16px; height: 18px; }
.dim { color: #888; }
.layer-actions .fx { font: italic 14px/16px "Liberation Serif", serif; color: #c0c0c0; }
.fx .tri { margin-top: 9px; border-width: 2px; }
footer { height: 2px; flex-shrink: 0; border-top: 1px solid #2b2b2b; background: #8a98a6; }

/* drop-down menus */
.menu {
    position: absolute;
    padding: 1px 0;
    background: #f0f0f0;
    border: 1px solid #979797;
    color: #000;
}
.menu button {
    width: 100%;
    height: 21px;
    justify-content: flex-start;
    padding: 0 18px 0 21px;
    position: relative;
    white-space: nowrap;
}
.menu button:disabled { color: #777; }
.menu kbd { font: inherit; margin-left: auto; }
.menu .sep { height: 9px; padding: 3px; }
.menu .sep::before { content: ""; display: block; height: 2px; background: #a0a0a0; border-bottom: 1px solid #fff; }
.menu .sub::after {
    content: "";
    position: absolute;
    right: 9px;
    top: 4px;
    border: 4px solid transparent;
    border-left: 5px solid #000;
    border-right: none;
}
.edit-menu { left: 99px; top: 22px; width: 246px; }
.current { position: relative; }
.menu .current > button { background: #3399ff; color: #fff; }
.menu .current > .sub::after { border-left-color: #fff; }
.submenu { left: 239px; bottom: -2px; width: 195px; }

.mark { position: absolute; border: 6px solid #f00; }
.mark-menu { left: 97px; top: -1px; width: 65px; height: 31px; }
.mark-item { left: -1px; top: -12px; width: 93px; height: 37px; }
.pointer { position: absolute; left: 196px; top: 12px; }
```
